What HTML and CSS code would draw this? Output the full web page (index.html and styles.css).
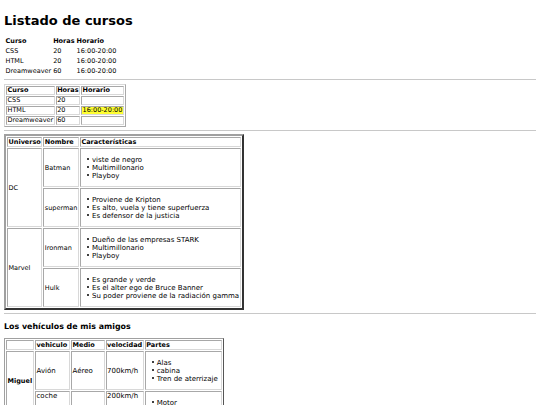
FILE: index.html
```html
<!DOCTYPE html>
<html lang="es">
<head>
<meta charset="utf-8">
<title>Listado de cursos</title>
<link rel="stylesheet" href="styles.css">
</head>
<body>
<h1 class="title">Listado de cursos</h1>
<table class="plain">
  <tr><th>Curso</th><th>Horas</th><th>Horario</th></tr>
  <tr><td>CSS</td><td>20</td><td>16:00-20:00</td></tr>
  <tr><td>HTML</td><td>20</td><td>16:00-20:00</td></tr>
  <tr><td>Dreamweaver</td><td>60</td><td>16:00-20:00</td></tr>
</table>
<hr class="rule">
<table class="thin">
  <tr><th>Curso</th><th>Horas</th><th>Horario</th></tr>
  <tr><td>CSS</td><td>20</td><td></td></tr>
  <tr><td>HTML</td><td>20</td><td class="mark">16:00-20:00</td></tr>
  <tr><td>Dreamweaver</td><td>60</td><td></td></tr>
</table>
<hr class="rule">
<table class="thick">
  <tr><th>Universo</th><th>Nombre</th><th>Características</th></tr>
  <tr>
    <td rowspan="2">DC</td>
    <td>Batman</td>
    <td><ul class="list"><li>viste de negro</li><li>Multimillonario</li><li>Playboy</li></ul></td>
  </tr>
  <tr>
    <td>superman</td>
    <td><ul class="list"><li>Proviene de Kripton</li><li>Es alto, vuela y tiene superfuerza</li><li>Es defensor de la justicia</li></ul></td>
  </tr>
  <tr>
    <td rowspan="2">Marvel</td>
    <td>Ironman</td>
    <td><ul class="list"><li>Dueño de las empresas STARK</li><li>Multimillonario</li><li>Playboy</li></ul></td>
  </tr>
  <tr>
    <td>Hulk</td>
    <td><ul class="list"><li>Es grande y verde</li><li>Es el alter ego de Bruce Banner</li><li>Su poder proviene de la radiación gamma</li></ul></td>
  </tr>
</table>
<hr class="rule">
<h3 class="subtitle">Los vehículos de mis amigos</h3>
<table class="mid">
  <tr><th class="c1"></th><th class="c2">vehiculo</th><th class="c3">Medio</th><th class="c4">velocidad</th><th class="c5">Partes</th></tr>
  <tr>
    <th rowspan="2">Miguel</th>
    <td>Avión</td>
    <td>Aéreo</td>
    <td>700km/h</td>
    <td><ul class="list"><li>Alas</li><li>cabina</li><li>Tren de aterrizaje</li></ul></td>
  </tr>
  <tr>
    <td class="top">coche</td>
    <td rowspan="2">Terrestre</td>
    <td class="top">200km/h</td>
    <td rowspan="2"><ul class="list"><li>Motor</li><li>ruedas</li><li>volante</li></ul></td>
  </tr>
  <tr>
    <th>Juan</th>
    <td>moto</td>
    <td>180km/h</td>
  </tr>
</table>
</body>
</html>
```
FILE: styles.css
```css
html { background: #fff; }
body {
  margin: 4px;
  font-family: "DejaVu Sans", Verdana, sans-serif;
  font-size: 6.5px;
  line-height: 8px;
  color: #000;
}
.title {
  font-size: 13px;
  line-height: 16px;
  margin: 8.5px 0 6.5px;
}
.subtitle {
  font-size: 7.9px;
  line-height: 9.5px;
  margin: 7.5px 0 7px;
}
table {
  border-spacing: 1px;
}
th, td {
  padding: 0.5px;
  text-align: left;
}
th { font-weight: bold; }
.rule {
  border: 0;
  border-top: 1px solid #c8c8c8;
  margin: 3.25px 0;
}
.thin {
  border: 1px solid;
  border-color: #d8d8d8 #a8a8a8 #a8a8a8 #d8d8d8;
}
.thin th, .thin td {
  line-height: 7px;
  padding: 0 0.5px;
}
.thin th, .thin td,
.thick th, .thick td,
.mid th, .mid td {
  border: 1px solid;
  border-color: #a8a8a8 #d8d8d8 #d8d8d8 #a8a8a8;
}
.thick th, .thick td,
.mid th, .mid td {
  padding: 0 0.5px;
}
.mark { background: #ffff33; }
.thick {
  border: 2.5px solid;
  border-color: #a0a0a0 #333 #333 #a0a0a0;
}
.mid {
  border: 1.5px solid;
  border-color: #a0a0a0 #555 #555 #a0a0a0;
}
.list {
  margin: 6.5px 0;
  padding-left: 10.5px;
  list-style: none;
  font-size: 7px;
  line-height: 8px;
}
.list li::before {
  content: "";
  display: inline-block;
  width: 2px;
  height: 2px;
  border-radius: 50%;
  background: #000;
  margin-left: -4.5px;
  margin-right: 2.5px;
  vertical-align: 1.5px;
}
.mid td { font-size: 7px; }
.c1 { width: 25px; }
.c2 { width: 32px; }
.c3 { width: 29px; }
.c4 { width: 35px; }
.c5 { width: 74px; }
.top { vertical-align: top; }
```
